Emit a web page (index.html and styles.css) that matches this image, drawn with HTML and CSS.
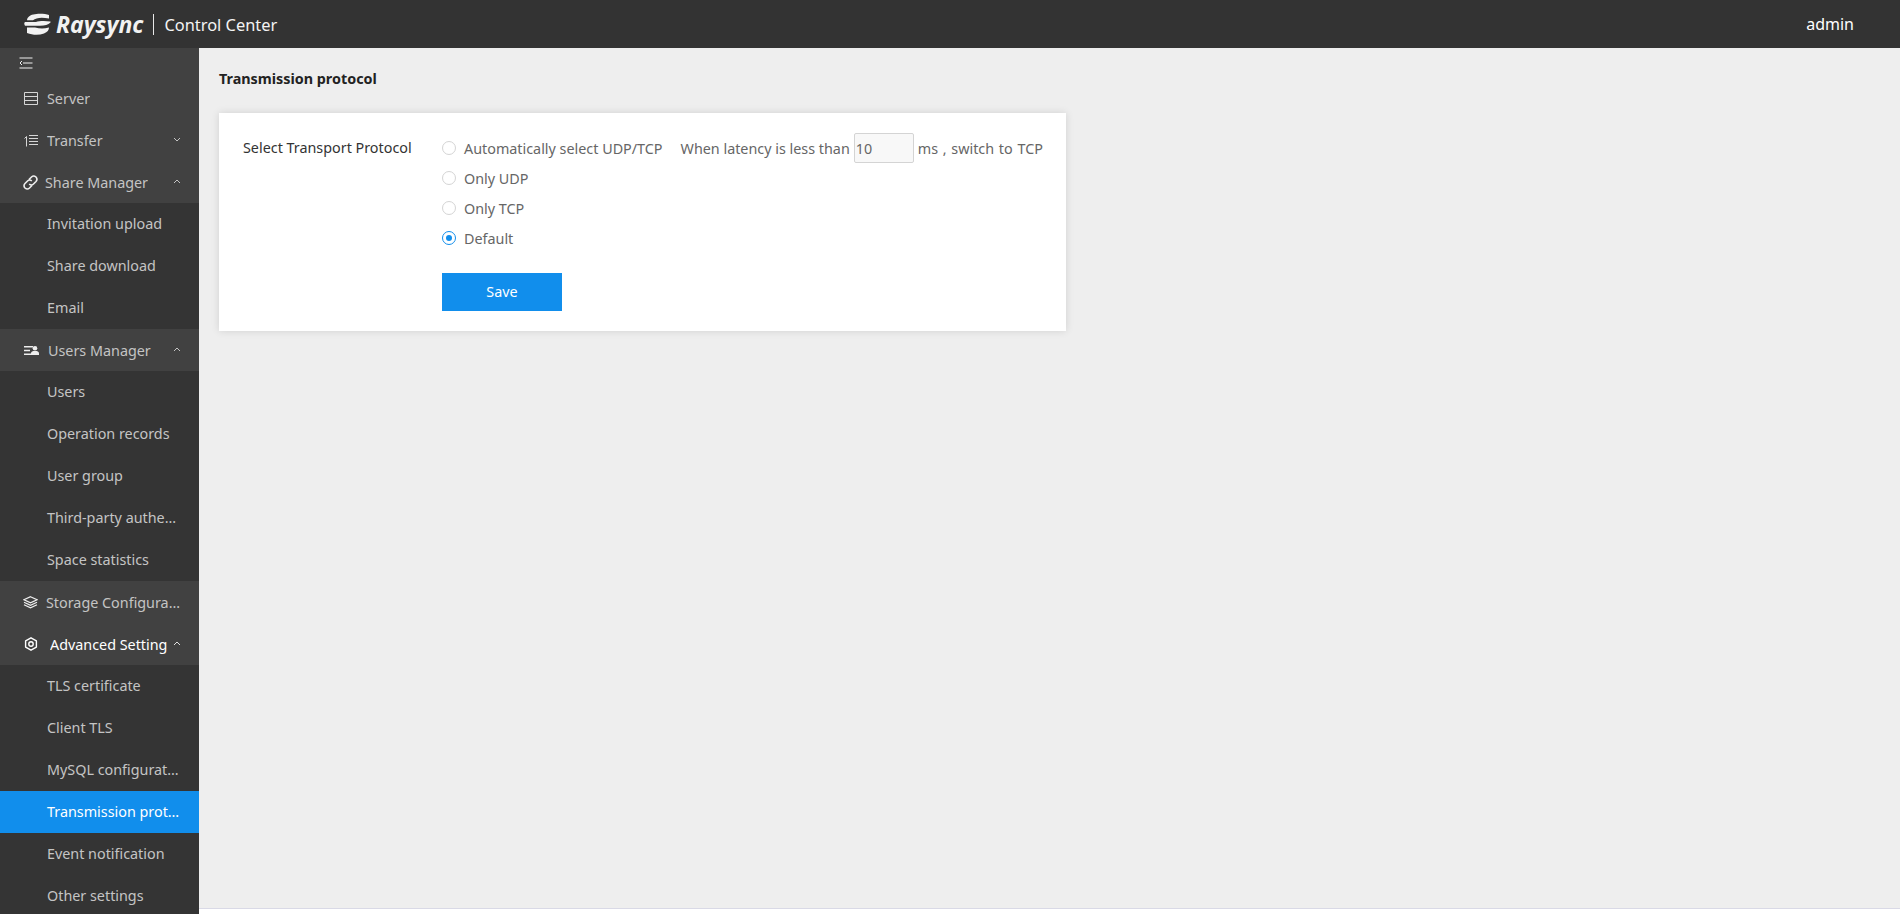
FILE: index.html
```html
<!DOCTYPE html>
<html lang="en">
<head>
<meta charset="utf-8">
<title>Raysync Control Center</title>
<link rel="stylesheet" href="styles.css">
</head>
<body>
<header class="topbar">
  <div class="brand">
    <svg class="logo" width="27" height="24" viewBox="0 0 27 24"><path d="M5 4.500C8 1 20 1 25 3V6.500C18 5 12 5.500 9 8.200H3C3 6.500 4 5.500 5 4.500Z" fill="#f2f2f2"/><path d="M1 10H12C15 9 20 8.500 26.500 9.500V10.500C24 13 21 13.700 16 13.700H1C0 12 0 11 1 10Z" fill="#f2f2f2"/><path d="M3 15.500H11C16 16.800 20 16.800 25 15.500C25 18 23.500 20 20 21.500C15 23.300 9 23.300 3 21V15.500Z" fill="#f2f2f2"/></svg>
    <span class="brand-name">Raysync</span>
    <span class="brand-sep"></span>
    <span class="brand-sub">Control Center</span>
  </div>
  <div class="user">admin</div>
</header>
<div class="body-row">
  <nav class="sidebar">
    <div class="collapse">
      <svg width="14" height="12" viewBox="0 0 14 12" fill="none" stroke="#f0f0f0" stroke-width="1"><path d="M0.500 1H13.500M4 6H13.500M0.500 11H13.500M3 4L1 6L3 8"/></svg>
    </div>
    <div class="nav-item">
      <svg class="nav-icon" width="14" height="13" viewBox="0 0 14 13" fill="none" stroke="#d6d6d6"><path d="M0.500 0.500H13.500V12.500H0.500ZM0.500 4.500H13.500M0.500 8.500H13.500"/></svg>
      <span class="nav-text">Server</span>
    </div>
    <div class="nav-item">
      <svg class="nav-icon" width="14" height="13" viewBox="0 0 14 13" fill="none" stroke="#d6d6d6"><path d="M2.500 2.500V12.500M0.500 4.500L2.500 2.500M5 1.500H14M5 4.500H14M5 7.500H14M5 10.500H14"/></svg>
      <span class="nav-text">Transfer</span>
      <svg class="chev" width="8" height="5" viewBox="0 0 8 5" fill="none" stroke="#c4c4c4"><path d="M1 1L4 4L7 1"/></svg>
    </div>
    <div class="nav-item nav-tight">
      <svg class="nav-icon" width="15" height="15" viewBox="0 0 15 15" fill="none" stroke="#eeeeee" stroke-width="1.600"><path d="M6 4.500L8.500 2C9.800 0.800 11.500 0.800 13 2C14.200 3.500 14.200 5.200 13 6.500L10.500 9C9.200 10.200 7.500 10.200 6.200 9M9 10.500L6.500 13C5.200 14.200 3.500 14.200 2 13C0.800 11.500 0.800 9.800 2 8.500L4.500 6C5.800 4.800 7.500 4.800 8.800 6"/></svg>
      <span class="nav-text">Share Manager</span>
      <svg class="chev" width="8" height="5" viewBox="0 0 8 5" fill="none" stroke="#c4c4c4"><path d="M1 4L4 1L7 4"/></svg>
    </div>
    <div class="sub-list">
      <div class="sub-item">Invitation upload</div>
      <div class="sub-item">Share download</div>
      <div class="sub-item">Email</div>
    </div>
    <div class="nav-item">
      <svg class="nav-icon" width="15" height="9" viewBox="0 0 15 9" fill="#eeeeee"><path d="M0 0H9V1.500H0ZM0 3.700H6V5.200H0ZM0 7.500H15V9H0ZM7 7.500C7 5.500 8.500 5 11 5C13.500 5 15 5.500 15 7.500Z"/><circle cx="11" cy="2.300" r="2.300"/></svg>
      <span class="nav-text">Users Manager</span>
      <svg class="chev" width="8" height="5" viewBox="0 0 8 5" fill="none" stroke="#c4c4c4"><path d="M1 4L4 1L7 4"/></svg>
    </div>
    <div class="sub-list">
      <div class="sub-item">Users</div>
      <div class="sub-item">Operation records</div>
      <div class="sub-item">User group</div>
      <div class="sub-item">Third-party authentication</div>
      <div class="sub-item">Space statistics</div>
    </div>
    <div class="nav-item nav-tight2">
      <svg class="nav-icon" width="15" height="13" viewBox="0 0 15 13" fill="none" stroke="#eeeeee" stroke-width="1.200"><path d="M7.500 0.700L14 3.800L7.500 6.900L1 3.800ZM1 6.300L7.500 9.400L14 6.300M1 8.800L7.500 11.900L14 8.800"/></svg>
      <span class="nav-text">Storage Configuration</span>
    </div>
    <div class="nav-item nav-active">
      <svg class="nav-icon" width="14" height="14" viewBox="0 0 14 14" fill="none" stroke="#ffffff" stroke-width="1.400"><path d="M7 0.800L12.400 3.900V10.100L7 13.200L1.600 10.100V3.900Z" stroke-linejoin="round"/><circle cx="7" cy="7" r="2.200"/></svg>
      <span class="nav-text">Advanced Setting</span>
      <svg class="chev" width="8" height="5" viewBox="0 0 8 5" fill="none" stroke="#e0e0e0"><path d="M1 4L4 1L7 4"/></svg>
    </div>
    <div class="sub-list">
      <div class="sub-item">TLS certificate</div>
      <div class="sub-item">Client TLS</div>
      <div class="sub-item">MySQL configuration</div>
      <div class="sub-item sub-current">Transmission protocol</div>
      <div class="sub-item">Event notification</div>
      <div class="sub-item">Other settings</div>
    </div>
  </nav>
  <div class="content-col">
    <main class="content">
      <h1 class="page-title">Transmission protocol</h1>
      <section class="card">
        <div class="field-label">Select Transport Protocol</div>
        <div class="field-body">
          <div class="radio-row">
            <span class="radio"></span><span class="radio-text">Automatically select UDP/TCP</span>
            <span class="latency">When latency is less than</span>
            <input class="latency-input" type="text" value="10">
            <span class="latency-end">ms , switch to TCP</span>
          </div>
          <div class="radio-row"><span class="radio"></span><span class="radio-text">Only UDP</span></div>
          <div class="radio-row"><span class="radio"></span><span class="radio-text">Only TCP</span></div>
          <div class="radio-row"><span class="radio radio-on"></span><span class="radio-text">Default</span></div>
          <button class="save" type="button">Save</button>
        </div>
      </section>
    </main>
    <div class="footer-strip"></div>
  </div>
</div>
</body>
</html>
```
FILE: styles.css
```css
* { box-sizing: border-box; }
html, body { margin: 0; height: 100%; overflow: hidden; }
body {
  font-family: "Noto Sans", "Open Sans", sans-serif;
  font-size: 14.35px;
  display: flex;
  flex-direction: column;
  background: #fff;
}
.topbar {
  height: 48px;
  flex: none;
  background: #333333;
  display: flex;
  align-items: center;
  justify-content: space-between;
  padding: 0 46px 0 24px;
  color: #fff;
}
.brand { display: flex; align-items: center; }
.logo { display: block; }
.brand-name {
  font-family: "Open Sans", sans-serif;
  font-style: italic;
  font-weight: 700;
  font-size: 23px;
  margin-left: 5px;
  color: #f2f2f2;
}
.brand-sep { width: 1px; height: 21px; background: #e8e8e8; margin: 0 10px; }
.brand-sub { font-size: 16.4px; color: #f4f4f4; }
.user { font-size: 16px; }
.body-row { flex: 1; display: flex; min-height: 0; }
.sidebar {
  width: 199px;
  flex: none;
  background: #414141;
  overflow: hidden;
}
.collapse { height: 29px; padding: 9px 0 0 19px; }
.collapse svg { display: block; }
.nav-item {
  height: 42px;
  display: flex;
  align-items: center;
  padding-left: 24px;
  color: #c4c4c4;
  background: #414141;
  position: relative;
}
.nav-icon { flex: none; display: block; }
.nav-text {
  margin-left: 9px;
  max-width: 136px;
  white-space: nowrap;
  overflow: hidden;
  text-overflow: ellipsis;
}
.nav-tight .nav-text { margin-left: 7px; }
.nav-tight .nav-icon { margin-left: -1px; }
.nav-tight2 .nav-icon { margin-left: -1px; }
.nav-tight2 .nav-text { margin-left: 8px; }
.nav-active { color: #fff; }
.nav-active .nav-text { margin-left: 12px; }
.chev { position: absolute; left: 173px; top: 18px; }
.sub-list { background: #343434; }
.sub-item {
  height: 42px;
  line-height: 42px;
  padding: 0 19px 0 47px;
  color: #c4c4c4;
  white-space: nowrap;
  overflow: hidden;
  text-overflow: ellipsis;
}
.sub-current { background: #118eec; color: #fff; }
.content-col { flex: 1; display: flex; flex-direction: column; min-width: 0; }
.content {
  flex: 1;
  background: #eeeeee;
  padding: 20px 20px 0;
  min-height: 0;
}
.footer-strip { height: 6px; flex: none; background: #fff; border-top: 1px solid #d9d9e6; }
.page-title {
  margin: 0 0 25px;
  padding-top: 1px;
  height: 20px;
  font-size: 14.35px;
  line-height: 20px;
  font-weight: 700;
  color: #222;
}
.card {
  width: 847px;
  height: 218px;
  background: #fff;
  box-shadow: 0 0 8px rgba(0, 0, 0, 0.12);
  padding: 20px 24px;
  display: flex;
}
.field-label { width: 199px; flex: none; line-height: 29px; color: #333; }
.field-body { flex: 1; min-width: 0; }
.radio-row { height: 30px; display: flex; align-items: center; color: #666; white-space: nowrap; }
.radio {
  width: 14px;
  height: 14px;
  flex: none;
  border: 1px solid #d4d4d4;
  border-radius: 50%;
  background: #fff;
  margin-right: 8px;
}
.radio-on { border-color: #118eec; position: relative; }
.radio-on::after {
  content: "";
  position: absolute;
  left: 3px;
  top: 3px;
  width: 6px;
  height: 6px;
  border-radius: 50%;
  background: #118eec;
}
.latency { margin-left: 18px; }
.latency-input {
  width: 60px;
  height: 30px;
  margin: 0 4px 0 4px;
  padding: 0 1px;
  border: 1px solid #d4d4d4;
  border-radius: 2px;
  background: #f8f8f8;
  color: #666;
  font: inherit;
  outline: none;
}
.latency-end { word-spacing: 1px; }
.save {
  display: block;
  width: 120px;
  height: 38px;
  margin-top: 20px;
  padding-bottom: 2px;
  border: 0;
  background: #118eec;
  color: #fff;
  font: inherit;
}
```
